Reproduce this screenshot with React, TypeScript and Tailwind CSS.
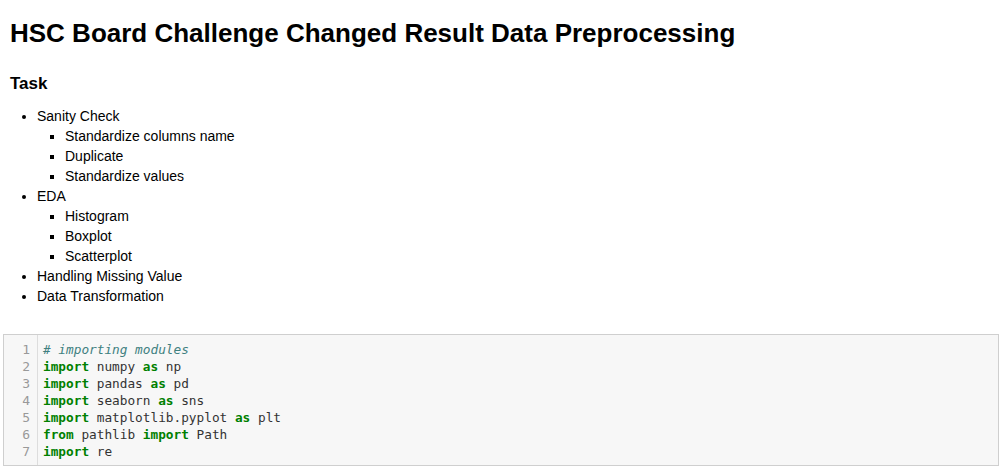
import * as React from 'react';

type Tok = { t: string; c?: 'kw' | 'cm' };

const codeLines: Tok[][] = [
  [{ t: '# importing modules', c: 'cm' }],
  [{ t: 'import', c: 'kw' }, { t: ' numpy ' }, { t: 'as', c: 'kw' }, { t: ' np' }],
  [{ t: 'import', c: 'kw' }, { t: ' pandas ' }, { t: 'as', c: 'kw' }, { t: ' pd' }],
  [{ t: 'import', c: 'kw' }, { t: ' seaborn ' }, { t: 'as', c: 'kw' }, { t: ' sns' }],
  [{ t: 'import', c: 'kw' }, { t: ' matplotlib.pyplot ' }, { t: 'as', c: 'kw' }, { t: ' plt' }],
  [{ t: 'from', c: 'kw' }, { t: ' pathlib ' }, { t: 'import', c: 'kw' }, { t: ' Path' }],
  [{ t: 'import', c: 'kw' }, { t: ' re' }],
];

const tasks = [
  { name: 'Sanity Check', subs: ['Standardize columns name', 'Duplicate', 'Standardize values'] },
  { name: 'EDA', subs: ['Histogram', 'Boxplot', 'Scatterplot'] },
  { name: 'Handling Missing Value', subs: [] },
  { name: 'Data Transformation', subs: [] },
];

const App: React.FC = () => {
  return (
    <div className="min-h-[470px] w-[1004px] bg-white text-black font-['Liberation_Sans',Arial,sans-serif]">
      <div className="px-[10px] pt-[16px]">
        <h1 className="text-[26px] font-bold leading-[34px]">HSC Board Challenge Changed Result Data Preprocessing</h1>
        <h3 className="mt-[24px] text-[17px] font-bold leading-[20px]">Task</h3>
        <ul className="mt-[12px] list-disc pl-[27px] text-[14px] leading-[20px]">
          {tasks.map((task) => (
            <li key={task.name}>
              {task.name}
              {task.subs.length > 0 && (
                <ul className="list-[square] pl-[28px]">
                  {task.subs.map((s) => (
                    <li key={s}>{s}</li>
                  ))}
                </ul>
              )}
            </li>
          ))}
        </ul>
      </div>

      <div className="mx-[3px] mt-[28px] w-[996px] border border-[#cfcfcf] bg-[#f7f7f7] flex">
        <div className="w-[34px] border-r border-[#ddd] pt-[6px] pb-[5px] pr-[7px] text-right font-['DejaVu_Sans_Mono',monospace] text-[13px] leading-[17px] text-[#999]">
          {codeLines.map((_, i) => (
            <div key={i}>{i + 1}</div>
          ))}
        </div>
        <pre className="flex-1 pt-[6px] pb-[5px] pl-[5px] font-['DejaVu_Sans_Mono',monospace] text-[12.75px] leading-[17px] text-[#333]">
          {codeLines.map((line, i) => (
            <div key={i}>
              {line.map((tok, j) => (
                <span
                  key={j}
                  className={
                    tok.c === 'kw'
                      ? 'font-bold text-[#008000]'
                      : tok.c === 'cm'
                      ? 'italic text-[#408080]'
                      : ''
                  }
                >
                  {tok.t}
                </span>
              ))}
            </div>
          ))}
        </pre>
      </div>
    </div>
  );
};

export default App;
